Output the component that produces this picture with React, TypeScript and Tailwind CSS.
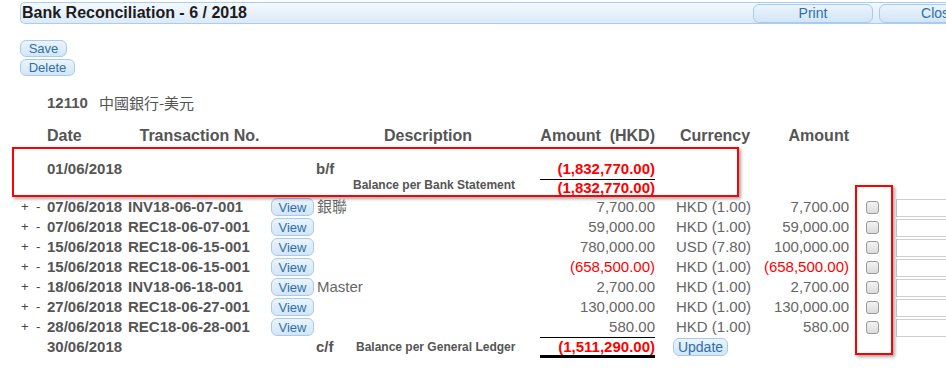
const rows = [
  { date: "07/06/2018", no: "INV18-06-07-001", desc: "銀聯", amt: "7,700.00", cur: "HKD (1.00)", fx: "7,700.00", neg: false },
  { date: "07/06/2018", no: "REC18-06-07-001", desc: "", amt: "59,000.00", cur: "HKD (1.00)", fx: "59,000.00", neg: false },
  { date: "15/06/2018", no: "REC18-06-15-001", desc: "", amt: "780,000.00", cur: "USD (7.80)", fx: "100,000.00", neg: false },
  { date: "15/06/2018", no: "REC18-06-15-001", desc: "", amt: "(658,500.00)", cur: "HKD (1.00)", fx: "(658,500.00)", neg: true },
  { date: "18/06/2018", no: "INV18-06-18-001", desc: "Master", amt: "2,700.00", cur: "HKD (1.00)", fx: "2,700.00", neg: false },
  { date: "27/06/2018", no: "REC18-06-27-001", desc: "", amt: "130,000.00", cur: "HKD (1.00)", fx: "130,000.00", neg: false },
  { date: "28/06/2018", no: "REC18-06-28-001", desc: "", amt: "580.00", cur: "HKD (1.00)", fx: "580.00", neg: false },
];

const btn =
  "rounded-[6px] border border-[#a9cbea] bg-gradient-to-b from-[#eaf4fd] to-[#d3e6f7] text-[#2f6ea6] leading-none flex items-center justify-center";

const App = () => {
  return (
    <div className="relative w-[946px] h-[378px] overflow-hidden bg-white text-[#555] font-['Liberation_Sans','Noto_Sans_CJK_TC',Arial,sans-serif]">
      {/* title bar */}
      <div className="pt-[2px] pl-[20px]">
        <div className="w-[990px] h-[22px] flex items-center pl-[1px] rounded-l-[5px] border border-r-0 border-[#a9cdea] bg-gradient-to-b from-[#f3f9fe] to-[#dceaf8]">
          <span className="w-[731px] text-[16px] font-bold text-[#1c1c1c] leading-none">Bank Reconciliation - 6 / 2018</span>
          <div className={`${btn} w-[120px] h-[19px] text-[14px]`}>Print</div>
          <div className={`${btn} w-[120px] h-[19px] text-[14px] ml-[6px]`}>Close</div>
        </div>
      </div>

      {/* actions */}
      <div className="ml-[20px] mt-[16px] flex flex-col items-start gap-[2px]">
        <div className={`${btn} w-[47px] h-[17px] text-[13px]`}>Save</div>
        <div className={`${btn} w-[55px] h-[17px] text-[13px]`}>Delete</div>
      </div>

      {/* account */}
      <div className="ml-[47px] mt-[17px] h-[20px] flex items-center text-[15px]">
        <span className="font-bold">12110</span>
        <span className="ml-[11px] font-['Noto_Sans_CJK_TC',sans-serif] text-[15px]">中國銀行-美元</span>
      </div>

      {/* headers */}
      <div className="mt-[13px] h-[20px] flex items-center text-[16px] font-bold">
        <div className="w-[47px]" />
        <div className="w-[81px]">Date</div>
        <div className="w-[143px] text-center">Transaction No.</div>
        <div className="w-[45px]" />
        <div className="w-[224px] text-center">Description</div>
        <div className="w-[115px] text-right whitespace-pre">Amount  (HKD)</div>
        <div className="w-[21px]" />
        <div className="w-[78px] text-center">Currency</div>
        <div className="w-[95px] text-right">Amount</div>
      </div>

      {/* brought forward */}
      <div className="mt-[13px] h-[20px] flex items-center text-[15px] font-bold">
        <div className="w-[47px]" />
        <div className="w-[269px]">01/06/2018</div>
        <div className="w-[224px]">b/f</div>
        <div className="w-[115px] text-right text-[#f00]">(1,832,770.00)</div>
      </div>
      <div className="h-[18px] flex font-bold">
        <div className="w-[353px]" />
        <div className="w-[187px] text-[12px] leading-none">Balance per Bank Statement</div>
        <div className="w-[115px] h-[18px] border-t border-b border-t-black border-b-black border-b-dotted text-right text-[15px] leading-[16px] text-[#f00]">(1,832,770.00)</div>
      </div>

      {/* transactions */}
      {rows.map((r, i) => (
        <div key={i} className="h-[20px] flex items-center text-[15px]">
          <div className="w-[47px] flex text-[13px] text-[#444] pl-[21px]">
            <span className="w-[15px]">+</span>
            <span>-</span>
          </div>
          <div className="w-[81px] font-bold">{r.date}</div>
          <div className="w-[143px] font-bold">{r.no}</div>
          <div className="w-[45px]">
            <div className={`${btn} w-[43px] h-[18px] text-[13px]`}>View</div>
          </div>
          <div className="w-[224px] pl-[1px] text-[#666]">{r.desc}</div>
          <div className={`w-[115px] text-right ${r.neg ? "text-[#f00]" : "text-[#666]"}`}>{r.amt}</div>
          <div className="w-[21px]" />
          <div className="w-[84px] text-[#666]">{r.cur}</div>
          <div className={`w-[89px] text-right ${r.neg ? "text-[#f00]" : "text-[#666]"}`}>{r.fx}</div>
          <div className="w-[47px] pl-[17px] flex items-center">
            <div className="w-[13px] h-[13px] rounded-[3px] border border-[#999] bg-gradient-to-b from-[#f2f2f2] to-[#dcdcdc]" />
          </div>
          <div className="flex-1 h-[18px] mt-[2px] border border-r-0 border-[#cfcfcf]" />
        </div>
      ))}

      {/* carried forward */}
      <div className="h-[20px] flex items-center text-[15px] font-bold">
        <div className="w-[47px]" />
        <div className="w-[269px]">30/06/2018</div>
        <div className="w-[40px]">c/f</div>
        <div className="w-[184px] text-[12px] self-start pt-[1px]">Balance per General Ledger</div>
        <div className="w-[115px] h-[21px] border-t border-t-black border-b-[3px] border-b-black border-b-double text-right leading-[17px] text-[#f00]">(1,511,290.00)</div>
        <div className="w-[18px]" />
        <div className={`${btn} w-[55px] h-[18px] text-[14px] font-normal`}>Update</div>
      </div>

      {/* highlight boxes */}
      <div className="absolute left-[12px] top-[147px] w-[727px] h-[50px] border-2 border-[#f00] shadow-[2px_2px_3px_rgba(0,0,0,0.35)]" />
      <div className="absolute left-[855px] top-[185px] w-[38px] h-[170px] border-2 border-[#f00] shadow-[2px_2px_3px_rgba(0,0,0,0.35)]" />
    </div>
  );
};

export default App;
